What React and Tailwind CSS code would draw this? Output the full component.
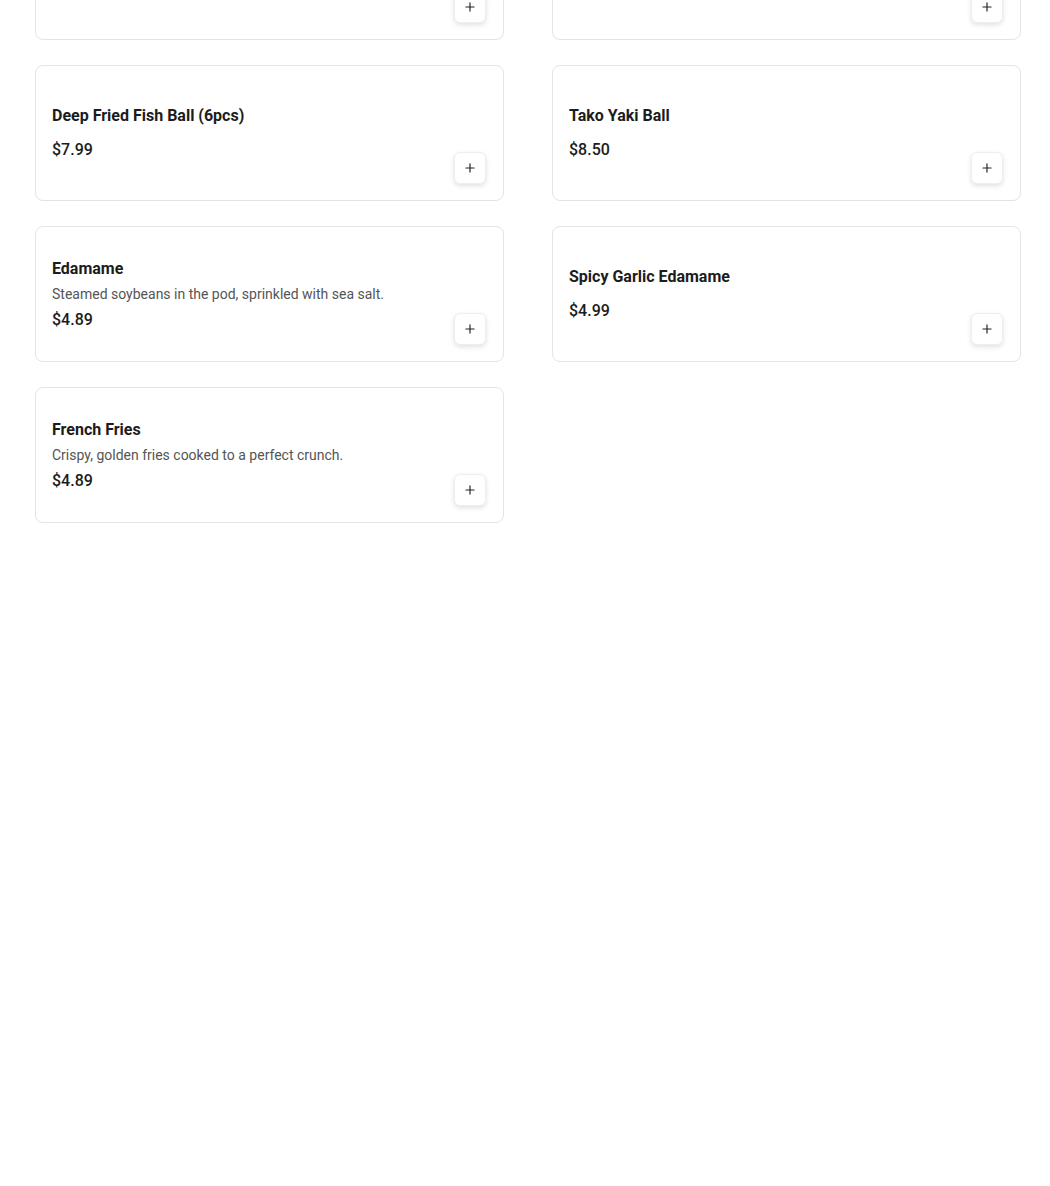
import React from "react";
import { Plus } from "lucide-react";

// first row is scrolled above the viewport, only its buttons show
const menuItems = [
  { id: "r1a" },
  { id: "r1b" },
  { id: "fishball", name: "Deep Fried Fish Ball (6pcs)", price: "$7.99" },
  { id: "takoyaki", name: "Tako Yaki Ball", price: "$8.50" },
  { id: "edamame", name: "Edamame", desc: "Steamed soybeans in the pod, sprinkled with sea salt.", price: "$4.89" },
  { id: "spicy", name: "Spicy Garlic Edamame", price: "$4.99" },
  { id: "fries", name: "French Fries", desc: "Crispy, golden fries cooked to a perfect crunch.", price: "$4.89" },
];

const MenuCard = ({ item }) => (
  <div className="flex h-[136px] rounded-lg border border-[#e4e4e4] bg-white py-4 pl-4 pr-[17px]">
    <div className="flex flex-1 flex-col justify-center">
      {item.name ? (
        <h3 className="text-base leading-6 font-bold text-[#1c1c1c]">{item.name}</h3>
      ) : null}
      {item.desc ? (
        <p className="mt-[3px] text-sm leading-5 text-[#555555]">{item.desc}</p>
      ) : null}
      {item.price ? (
        <p className={(item.desc ? "mt-[4px]" : "mt-[10px]") + " text-base leading-6 font-medium text-[#1c1c1c]"}>
          {item.price}
        </p>
      ) : null}
    </div>
    <div className="flex items-end">
      <button className="flex h-8 w-8 items-center justify-center rounded-md border border-[#eeeeee] bg-white text-[#222222] shadow-[0_2px_5px_rgba(0,0,0,0.12)]">
        <Plus size={14} strokeWidth={2} />
      </button>
    </div>
  </div>
);

export default function App() {
  return (
    <div className="min-h-[1186px] bg-white font-['Roboto','Liberation_Sans',sans-serif]">
      <div className="mt-[-96px] grid grid-cols-[469px_469px] gap-x-[48px] gap-y-[25px] pl-[35px]">
        {menuItems.map((item) => (
          <MenuCard key={item.id} item={item} />
        ))}
      </div>
    </div>
  );
}
